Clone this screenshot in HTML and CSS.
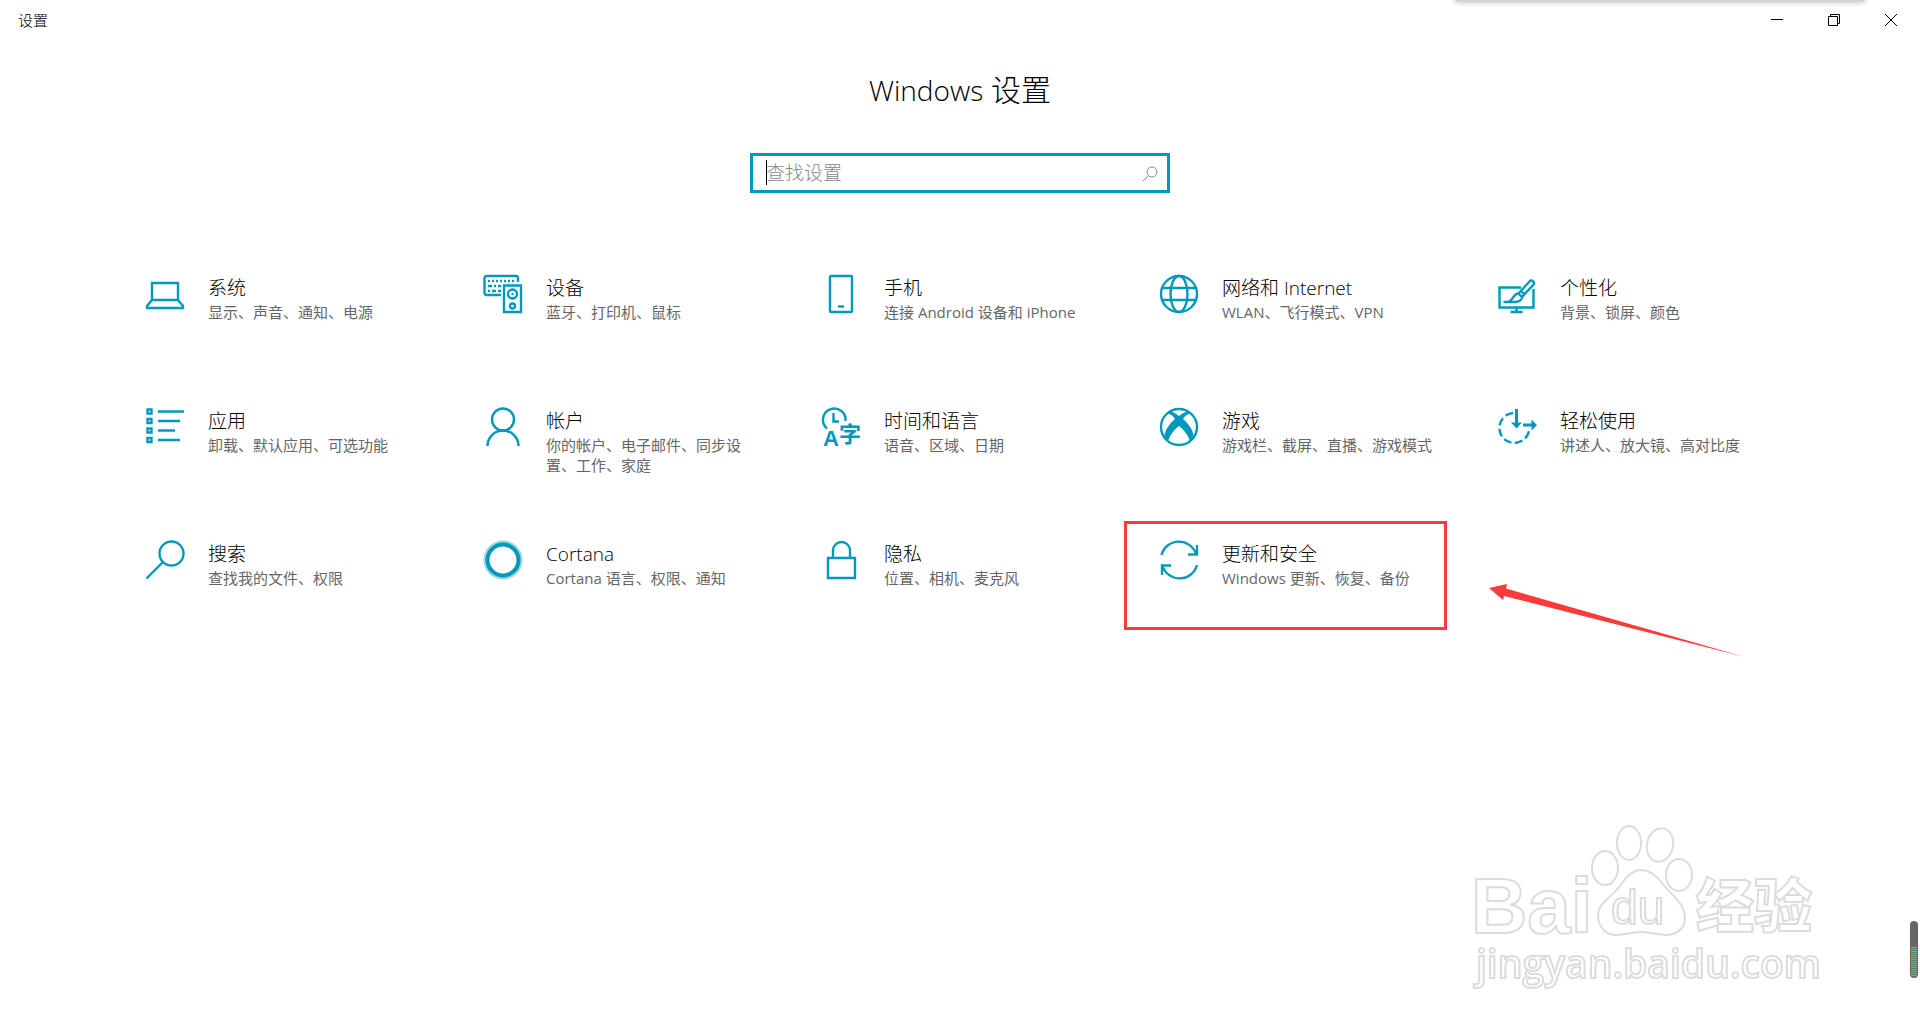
FILE: index.html
```html
<!DOCTYPE html>
<html lang="zh-CN">
<head>
<meta charset="utf-8">
<meta name="viewport" content="width=device-width, initial-scale=1">
<title>设置</title>
<link rel="stylesheet" href="styles.css">
</head>
<body>
<div class="top-shadow"></div>
<header class="titlebar">
  <span class="titlebar-name">设置</span>
  <div class="window-controls">
    <button class="window-button" type="button" aria-label="最小化"><svg width="14" height="14" viewBox="0 0 14 14"><path d="M1 6.500h12"/></svg></button>
    <button class="window-button" type="button" aria-label="还原"><svg width="14" height="14" viewBox="0 0 14 14"><path d="M1.500 3.500h9v9h-9zM3.500 3.500v-2h9v9h-2"/></svg></button>
    <button class="window-button" type="button" aria-label="关闭"><svg width="14" height="14" viewBox="0 0 14 14"><path d="M1 1l12 12M13 1L1 13"/></svg></button>
  </div>
</header>

<main class="settings">
  <h1 class="heading"><span class="heading-latin">Windows</span> 设置</h1>
  <form class="search" role="search">
    <input class="search-input" type="text" placeholder="查找设置" aria-label="查找设置">
    <span class="caret"></span>
    <button class="search-button" type="button" aria-label="搜索"><svg width="16" height="16" viewBox="0 0 16 16"><circle cx="10" cy="6" r="5"/><path d="M6.500 9.500L1 15"/></svg></button>
  </form>

  <ul class="grid">
    <li class="cell"><a class="tile" href="#system">
      <svg class="icon" viewBox="0 0 40 40"><path d="M7 9h26v17H7zM7 26l-5 6v2h36v-2l-5-6"/></svg>
      <span class="label"><span class="name">系统</span><span class="detail">显示、声音、通知、电源</span></span></a></li>
    <li class="cell"><a class="tile" href="#devices">
      <svg class="icon" viewBox="0 0 40 40"><path d="M18 21H3.500a2 2 0 0 1-2-2V4a2 2 0 0 1 2-2H33a2 2 0 0 1 2 2v4"/><path d="M5 7h28" stroke-dasharray="2 2"/><path d="M5 12h4m2 0h2m2 0h3M5 17h2m2 0h4m2 0h3"/><path d="M21 11.500h17v26.500H21z"/><circle cx="29.500" cy="20" r="4.500"/><circle cx="29.500" cy="32" r="2.500"/><path d="M28.500 20h2"/></svg>
      <span class="label"><span class="name">设备</span><span class="detail">蓝牙、打印机、鼠标</span></span></a></li>
    <li class="cell"><a class="tile" href="#phone">
      <svg class="icon" viewBox="0 0 40 40"><rect x="9" y="2" width="22" height="36" rx="1"/><path d="M17 32.500h6"/></svg>
      <span class="label"><span class="name">手机</span><span class="detail">连接 Android 设备和 iPhone</span></span></a></li>
    <li class="cell"><a class="tile" href="#network">
      <svg class="icon" viewBox="0 0 40 40"><circle cx="20" cy="20" r="18"/><ellipse cx="20" cy="20" rx="8.500" ry="18"/><path d="M3 14h34M3 26h34"/></svg>
      <span class="label"><span class="name">网络和 Internet</span><span class="detail">WLAN、飞行模式、VPN</span></span></a></li>
    <li class="cell"><a class="tile" href="#personalization">
      <svg class="icon" viewBox="0 0 40 40"><path d="M24 13.500H2.500v20h34V15M19.500 34v4M13.500 38h12"/><path d="M21.500 19.500L32.500 7.500a2.500 2.500 0 0 1 3.700 3.500L25 23zM21.500 19.500c-6 0-5 8-11 8.500H6.500h11c5 0 7.500-2.500 7.500-5M24 17l3.500 3.500"/></svg>
      <span class="label"><span class="name">个性化</span><span class="detail">背景、锁屏、颜色</span></span></a></li>

    <li class="cell"><a class="tile" href="#apps">
      <svg class="icon" viewBox="0 0 40 40"><path d="M2.500 2.500h4v4h-4zM2.500 12h4v4h-4zM2.500 21.500h4v4h-4zM2.500 31h4v4h-4zM13 4.500h26M13 14h22M13 23.500h17M13 33h22"/></svg>
      <span class="label"><span class="name">应用</span><span class="detail">卸载、默认应用、可选功能</span></span></a></li>
    <li class="cell"><a class="tile" href="#accounts">
      <svg class="icon" viewBox="0 0 40 40"><circle cx="20" cy="12.500" r="11"/><path d="M4.500 39a15.500 15.500 0 0 1 31 0"/></svg>
      <span class="label"><span class="name">帐户</span><span class="detail">你的帐户、电子邮件、同步设置、工作、家庭</span></span></a></li>
    <li class="cell"><a class="tile" href="#time">
      <svg class="icon" viewBox="0 0 40 40"><path d="M6 21.500A11.300 11.300 0 1 1 24.500 14M12.500 6v8.500H18"/><text class="icon-latin" x="2" y="39">A</text><text class="icon-han" x="18" y="35">字</text></svg>
      <span class="label"><span class="name">时间和语言</span><span class="detail">语音、区域、日期</span></span></a></li>
    <li class="cell"><a class="tile" href="#gaming">
      <svg class="icon" viewBox="0 0 40 40"><circle cx="20" cy="20" r="18"/><path class="solid" d="M7 7c5-4 9-1 13 2 4-3 8-6 13-2-4-1-7 2-9 5 7 6 12 14 10 20l-3 3c-1-6-6-12-11-16-5 4-10 10-11 16l-3-3c-2-6 3-14 10-20-2-3-5-6-9-5z"/></svg>
      <span class="label"><span class="name">游戏</span><span class="detail">游戏栏、截屏、直播、游戏模式</span></span></a></li>
    <li class="cell"><a class="tile" href="#ease">
      <svg class="icon" viewBox="0 0 40 40"><path d="M16 6A15 15 0 1 0 32.300 22" stroke-dasharray="8 3.500"/><path d="M19.500 2v16M26 18h10" stroke-width="3"/><path class="solid" d="M14 15.500h11l-5.500 6zM34.500 12.500v11l5.500-5.500z"/></svg>
      <span class="label"><span class="name">轻松使用</span><span class="detail">讲述人、放大镜、高对比度</span></span></a></li>

    <li class="cell"><a class="tile" href="#search">
      <svg class="icon" viewBox="0 0 40 40"><circle cx="26.500" cy="13.500" r="12"/><path d="M18 22L1.500 38.500"/></svg>
      <span class="label"><span class="name">搜索</span><span class="detail">查找我的文件、权限</span></span></a></li>
    <li class="cell"><a class="tile" href="#cortana">
      <svg class="icon" viewBox="0 0 40 40"><circle class="halo" cx="20" cy="20" r="17"/><circle class="ring" cx="20" cy="20" r="15.500"/></svg>
      <span class="label"><span class="name">Cortana</span><span class="detail">Cortana 语言、权限、通知</span></span></a></li>
    <li class="cell"><a class="tile" href="#privacy">
      <svg class="icon" viewBox="0 0 40 40"><path d="M7 18h27v20H7zM12 18V10.500a8.500 8.500 0 0 1 17 0V18"/></svg>
      <span class="label"><span class="name">隐私</span><span class="detail">位置、相机、麦克风</span></span></a></li>
    <li class="cell"><a class="tile" href="#update">
      <svg class="icon" viewBox="0 0 40 40"><path d="M2.500 15A18 18 0 0 1 37 14M38 5v9.500h-9M38 25A18 18 0 0 1 3.500 26M3 35v-9.500h9"/></svg>
      <span class="label"><span class="name">更新和安全</span><span class="detail">Windows 更新、恢复、备份</span></span></a>
      <div class="highlight"></div>
      <svg class="arrow" width="256" height="74" viewBox="0 0 256 74"><path d="M0 4L18 0l-1 4.500L256 73 15 12l-1 4z"/></svg>
    </li>
  </ul>
</main>

<svg class="watermark" width="370" height="180" viewBox="0 0 370 180">
  <text class="mark-bai" x="11" y="118">Bai</text>
  <ellipse cx="145" cy="53" rx="13" ry="17"/>
  <ellipse cx="169" cy="28" rx="12" ry="17"/>
  <ellipse cx="200" cy="30" rx="13" ry="17" transform="rotate(12 200 30)"/>
  <ellipse cx="219" cy="60" rx="13" ry="16"/>
  <path d="M181 55C190 55 196 60 202 68 210 79 225 88 225 103 225 114 216 120 206 120 198 120 190 117 181 117 172 117 164 120 156 120 146 120 138 112 138 100 138 88 152 82 160 71 167 61 173 55 181 55Z"/>
  <text class="mark-du" x="151" y="109">du</text>
  <text class="mark-han" x="236" y="112">经验</text>
  <text class="mark-url" x="16" y="163">jingyan.baidu.com</text>
</svg>
<div class="meter"><div class="meter-fill"></div></div>
</body>
</html>
```
FILE: styles.css
```css
* { box-sizing: border-box; }

body {
  margin: 0;
  min-height: 100vh;
  position: relative;
  overflow-x: hidden;
  background: #fff;
  color: #000;
  font-family: "Open Sans", "Noto Sans CJK SC", sans-serif;
}

button { padding: 0; border: 0; background: none; }

.top-shadow {
  position: absolute;
  top: -10px;
  right: 56px;
  width: 408px;
  height: 12px;
  background: #d4d4d4;
  box-shadow: 0 0 5px 1px #ccc;
}

.titlebar {
  display: flex;
  justify-content: space-between;
  align-items: center;
  height: 40px;
  padding: 0 1px 0 18px;
}
.titlebar-name { font-size: 15px; line-height: 20px; font-weight: 300; }
.window-controls { display: flex; }
.window-button {
  display: flex;
  align-items: center;
  justify-content: center;
  width: 57px;
  height: 40px;
}
.window-button svg { fill: none; stroke: #000; }

.settings { display: flex; flex-direction: column; align-items: center; }
.heading {
  margin: 30px 0 43px;
  font-size: 30px;
  line-height: 40px;
  font-weight: 300;
}
.heading-latin { font-size: 28px; }

.search { position: relative; width: 420px; max-width: 100%; height: 40px; }
.search-input {
  width: 100%;
  height: 100%;
  padding: 0 40px 0 13px;
  border: 3px solid #0099bc;
  outline: 0;
  font: 300 19px/28px "Open Sans", "Noto Sans CJK SC", sans-serif;
}
.search-input::placeholder { color: #888; opacity: 1; }
.caret {
  position: absolute;
  left: 16px;
  top: 7px;
  width: 1px;
  height: 25px;
  background: #000;
}
.search-button {
  position: absolute;
  top: 13px;
  right: 12px;
  width: 16px;
  height: 16px;
}
.search-button svg { display: block; fill: none; stroke: #888; }

.grid {
  display: grid;
  grid-template-columns: repeat(auto-fit, minmax(320px, 1fr));
  width: 100%;
  max-width: 1690px;
  margin: 81px 0 0;
  padding: 0;
  list-style: none;
}
.cell { position: relative; min-height: 133px; }
.tile {
  display: flex;
  gap: 23px;
  padding: 0 30px;
  color: inherit;
  text-decoration: none;
}
.icon {
  flex: none;
  width: 40px;
  height: 40px;
  overflow: visible;
  fill: none;
  stroke: #0099bc;
  stroke-width: 2.4;
}
.icon .solid, .icon text { fill: #0099bc; stroke: none; }
.icon .halo { stroke: #99d6e4; stroke-width: 5; }
.icon .ring { stroke-width: 4; }
.icon-latin { font: 700 22px "Liberation Sans", sans-serif; }
.icon-han { font: 700 22px "Noto Sans CJK SC", sans-serif; }
.label { display: flex; flex-direction: column; min-width: 0; }
.name { font-size: 19px; line-height: 28px; font-weight: 300; }
.detail { font-size: 15px; line-height: 20px; color: #666; }

.highlight {
  position: absolute;
  left: -5px;
  top: -19px;
  width: 323px;
  height: 109px;
  border: 3px solid #fb3a3a;
  pointer-events: none;
}
.arrow {
  position: absolute;
  left: 360px;
  top: 44px;
  fill: #fb3a3a;
  pointer-events: none;
}

.watermark {
  position: absolute;
  right: 90px;
  bottom: 35px;
  overflow: visible;
  fill: #fff;
  stroke: #dcdcdc;
  stroke-width: 2;
  filter: blur(0.6px);
  pointer-events: none;
}
.mark-bai { font: 700 78px "Liberation Sans", sans-serif; }
.mark-du { font: 400 48px "Liberation Sans", sans-serif; }
.mark-han { font: 900 58px "Noto Sans CJK SC", sans-serif; }
.mark-url { font: 600 39px "Open Sans", sans-serif; }

.meter {
  position: absolute;
  right: 2px;
  bottom: 52px;
  display: flex;
  align-items: flex-end;
  width: 8px;
  height: 57px;
  padding: 1px;
  border-radius: 4px;
  background: #666;
}
.meter-fill {
  width: 100%;
  height: 30px;
  border-radius: 0 0 3px 3px;
  background: repeating-linear-gradient(#4fc971 0 1px, #55805f 1px 2px);
}
```
